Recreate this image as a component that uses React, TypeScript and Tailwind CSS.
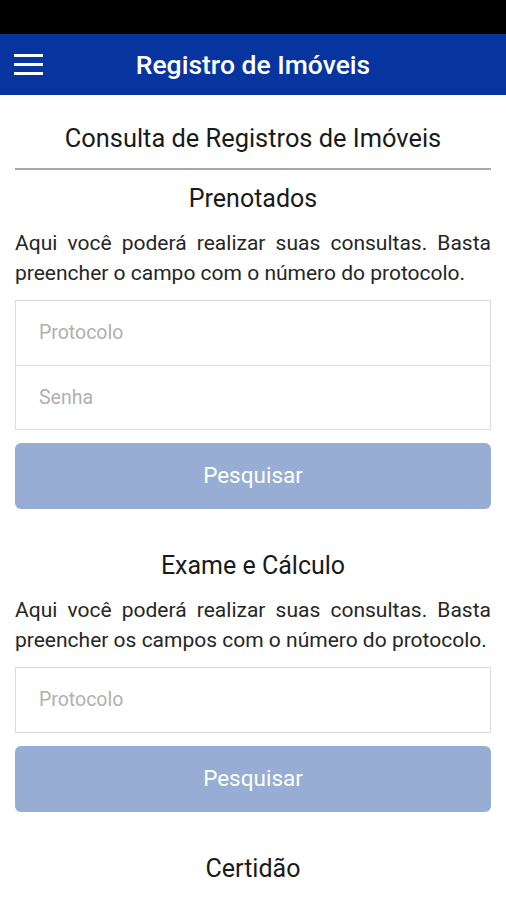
import React from "react";

function Section({
  title,
  text,
  fields,
  first,
}: {
  title: string;
  text: string;
  fields: string[];
  first?: boolean;
}) {
  return (
    <div className={first ? "mt-[14px]" : "mt-[42px]"}>
      <h2 className="text-center text-[25px] leading-[30px] text-[#1a1a1a]">{title}</h2>
      <p className="mt-[14px] text-justify text-[21px] leading-[30px] text-[#262626]">{text}</p>
      <div className="mt-[12px] border border-[#dcdcdc] bg-white">
        {fields.map((f, i) => (
          <div
            key={f}
            className={
              "flex h-[64px] items-center pl-[23px] text-[19.5px] text-[#b0b0b0] " +
              (i > 0 ? "border-t border-[#dcdcdc]" : "")
            }
          >
            {f}
          </div>
        ))}
      </div>
      <button className="mt-[13px] flex h-[66px] w-full items-center justify-center rounded-[6px] bg-[#98add4] text-[22.5px] text-white">
        Pesquisar
      </button>
    </div>
  );
}

export default function App() {
  return (
    <div
      className="h-[900px] w-[506px] overflow-hidden bg-white"
      style={{ fontFamily: "Roboto, 'Noto Sans', sans-serif" }}
    >
      <div className="h-[34px] bg-black" />
      <header className="relative flex h-[61px] items-center justify-center bg-[#0735a0]">
        <div className="absolute left-[14px] top-[20px] flex w-[29px] flex-col gap-[6px]">
          <span className="block h-[3px] bg-white" />
          <span className="block h-[3px] bg-white" />
          <span className="block h-[3px] bg-white" />
        </div>
        <h1 className="text-[26.5px] font-medium text-white">Registro de Imóveis</h1>
      </header>
      <main className="px-[15px]">
        <div className="mt-[28px] text-center text-[25.4px] leading-[30px] text-[#1a1a1a]">
          Consulta de Registros de Imóveis
        </div>
        <div className="mt-[15px] h-[2px] bg-[#a8a8a8]" />
        <Section
          first
          title="Prenotados"
          text="Aqui você poderá realizar suas consultas. Basta preencher o campo com o número do protocolo."
          fields={["Protocolo", "Senha"]}
        />
        <Section
          title="Exame e Cálculo"
          text="Aqui você poderá realizar suas consultas. Basta preencher os campos com o número do protocolo."
          fields={["Protocolo"]}
        />
        <div className="mt-[42px] text-center text-[25px] leading-[30px] text-[#1a1a1a]">Certidão</div>
      </main>
    </div>
  );
}
